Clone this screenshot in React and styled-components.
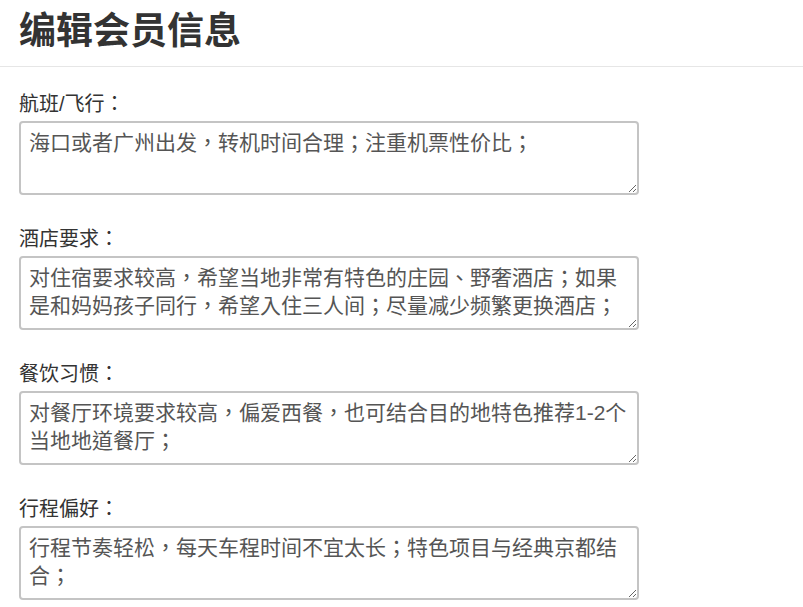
import React from 'react';
import styled, { createGlobalStyle } from 'styled-components';

const GlobalStyle = createGlobalStyle`
  html, body {
    margin: 0;
    padding: 0;
    background: #fff;
  }
  body {
    font-family: "Liberation Sans", "Noto Sans CJK TC", sans-serif;
    color: #333;
  }
`

const Header = styled.div`
  height: 66px;
  display: flex;
  align-items: center;
  padding: 0 19px;
  border-bottom: 1px solid #e6e6e6;
`

const Title = styled.h1`
  margin: 0 0 2px;
  font-size: 37px;
  line-height: 40px;
  font-weight: bold;
  color: #333;
  font-family: "Liberation Sans", "Noto Sans CJK SC", sans-serif;
`

const Form = styled.div`
  padding: 23px 19px 0;
`

const Field = styled.div`
  margin-bottom: 30px;
`

const Label = styled.label`
  display: block;
  font-size: 20px;
  line-height: 28px;
  margin-bottom: 3px;
  color: #333;
`

const TextBox = styled.textarea`
  display: block;
  box-sizing: border-box;
  width: 620px;
  height: 74px;
  margin: 0;
  padding: 6px 8px;
  border: 2px solid #c4c4c4;
  border-radius: 4px;
  font-family: "Liberation Sans", "Noto Sans CJK TC", sans-serif;
  font-size: 21px;
  line-height: 28px;
  color: #555;
  background: #fff;
  resize: vertical;
  overflow: hidden;
  outline: none;
`

const fields = [
  { label: '航班/飞行：', text: '海口或者广州出发，转机时间合理；注重机票性价比；' },
  { label: '酒店要求：', text: '对住宿要求较高，希望当地非常有特色的庄园、野奢酒店；如果是和妈妈孩子同行，希望入住三人间；尽量减少频繁更换酒店；' },
  { label: '餐饮习惯：', text: '对餐厅环境要求较高，偏爱西餐，也可结合目的地特色推荐1-2个当地地道餐厅；' },
  { label: '行程偏好：', text: '行程节奏轻松，每天车程时间不宜太长；特色项目与经典京都结合；' },
];

export default function App() {
  return (
    <div>
      <GlobalStyle />
      <Header>
        <Title>编辑会员信息</Title>
      </Header>
      <Form>
        {fields.map((f) => (
          <Field key={f.label}>
            <Label>{f.label}</Label>
            <TextBox readOnly value={f.text} />
          </Field>
        ))}
      </Form>
    </div>
  );
}
